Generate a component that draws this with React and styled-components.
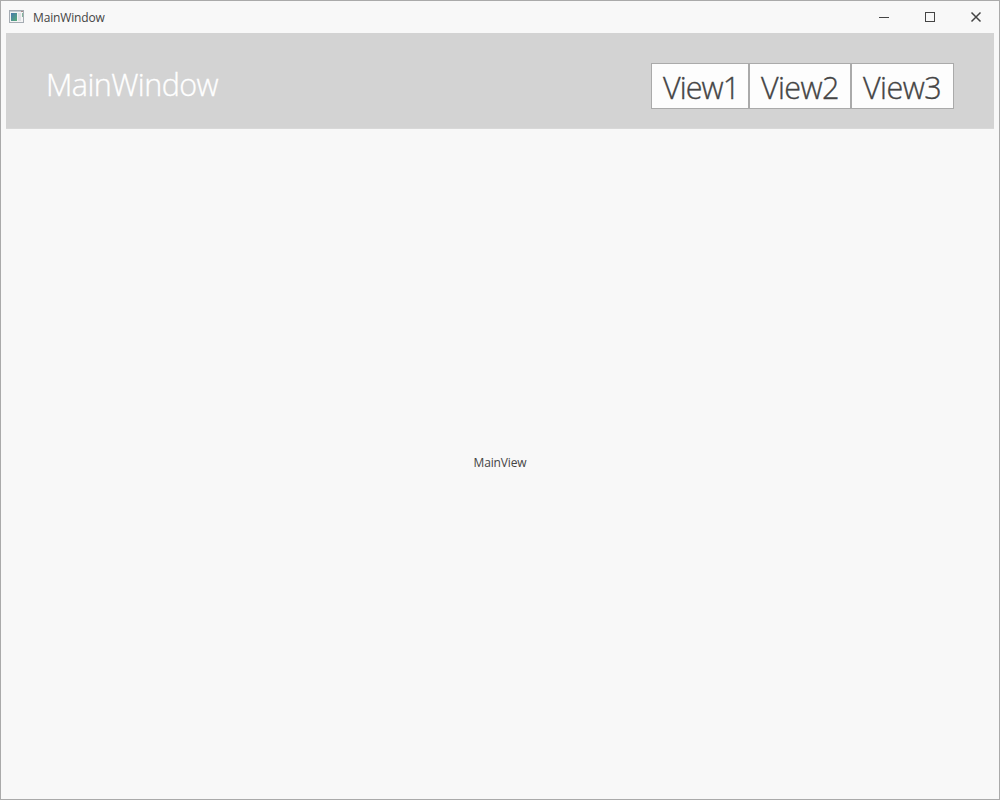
import React from "react";
import styled, { createGlobalStyle } from "styled-components";

const GlobalStyle = createGlobalStyle`
  * { box-sizing: border-box; }
  body {
    margin: 0;
    background: #fff;
    color: #444;
    font-family: "Open Sans", "Noto Sans", sans-serif;
  }
`;

const WindowFrame = styled.div`
  display: flex;
  flex-direction: column;
  width: 1000px;
  height: 800px;
  border: 1px solid #aaa;
  background: #f8f8f8;
`;

const TitleBar = styled.header`
  display: flex;
  align-items: center;
  height: 32px;
  padding-left: 8px;
`;

const Caption = styled.span`
  flex: 1;
  margin-left: 8px;
  padding-top: 1px;
  font-size: 12px;
  line-height: 16px;
  letter-spacing: -0.15px;
`;

const CaptionButton = styled.button`
  display: flex;
  align-items: center;
  justify-content: center;
  width: 46px;
  height: 32px;
  padding: 0;
  border: 0;
  background: transparent;
  color: #444;
`;

const Banner = styled.div`
  display: flex;
  align-items: flex-start;
  justify-content: space-between;
  height: 96px;
  margin: 0 5px;
  padding: 30px 40px 0;
  border: solid #d8d8d8;
  border-width: 0 0 1px;
  background: #d3d3d3;
`;

const Heading = styled.h1`
  margin: 0;
  color: #fff;
  font-size: 30.5px;
  font-weight: 300;
  line-height: 42px;
  letter-spacing: -0.55px;
  -webkit-text-stroke: 0.35px currentColor;
`;

const Tabs = styled.nav`
  display: flex;
`;

const Tab = styled.button`
  width: ${(p) => p.$width}px;
  height: 46px;
  padding: 2px 0 0 11px;
  border: 1px solid #aaa;
  background: #fdfdfd;
  color: #444;
  font-family: inherit;
  font-size: 30.5px;
  font-weight: 300;
  line-height: 40px;
  letter-spacing: ${(p) => p.$tracking}px;
  text-align: left;
  white-space: nowrap;
  -webkit-text-stroke: 0.35px currentColor;
`;

const Content = styled.main`
  display: flex;
  flex: 1;
  align-items: center;
  justify-content: center;
  padding-bottom: 4px;
  font-size: 12px;
  letter-spacing: -0.15px;
`;

const AppIcon = () => (
  <svg width="16" height="16" viewBox="0 0 16 16" shapeRendering="crispEdges">
    <defs>
      <linearGradient id="pane" x1="0" y1="0" x2="1" y2="1">
        <stop offset="0" stopColor="#4778ad" />
        <stop offset="1" stopColor="#58ad78" />
      </linearGradient>
    </defs>
    <rect x="0.5" y="1.5" width="14" height="12" fill="#f4f4f4" stroke="#a5acb3" />
    <path d="M1 2.5h13" stroke="#c5cbd2" />
    <rect x="2" y="4" width="6" height="8" fill="url(#pane)" />
    <rect x="9" y="4" width="3" height="8" fill="#e0e1e5" />
    <rect x="13" y="4" width="1" height="4" fill="#83b49b" />
    <rect x="12" y="2" width="2" height="1" fill="#a48b8b" />
  </svg>
);

const Glyph = ({ d, crisp }) => (
  <svg
    width="12"
    height="12"
    viewBox="0 0 12 12"
    fill="none"
    stroke="currentColor"
    strokeWidth={crisp ? 1 : 1.5}
    shapeRendering={crisp ? "crispEdges" : "auto"}
  >
    <path d={d} />
  </svg>
);

const views = [
  { label: "View1", width: 98, tracking: -0.9 },
  { label: "View2", width: 102, tracking: -0.6 },
  { label: "View3", width: 103, tracking: -0.5 },
];

export default function App() {
  return (
    <>
      <GlobalStyle />
      <WindowFrame>
        <TitleBar>
          <AppIcon />
          <Caption>MainWindow</Caption>
          <CaptionButton aria-label="Minimize">
            <Glyph crisp d="M1 6.5h10" />
          </CaptionButton>
          <CaptionButton aria-label="Maximize">
            <Glyph crisp d="M1.5 1.5h9v9h-9z" />
          </CaptionButton>
          <CaptionButton aria-label="Close">
            <Glyph d="M1.5 1.5l9 9M10.5 1.5l-9 9" />
          </CaptionButton>
        </TitleBar>
        <Banner>
          <Heading>MainWindow</Heading>
          <Tabs>
            {views.map((v) => (
              <Tab key={v.label} $width={v.width} $tracking={v.tracking}>
                {v.label}
              </Tab>
            ))}
          </Tabs>
        </Banner>
        <Content>MainView</Content>
      </WindowFrame>
    </>
  );
}
